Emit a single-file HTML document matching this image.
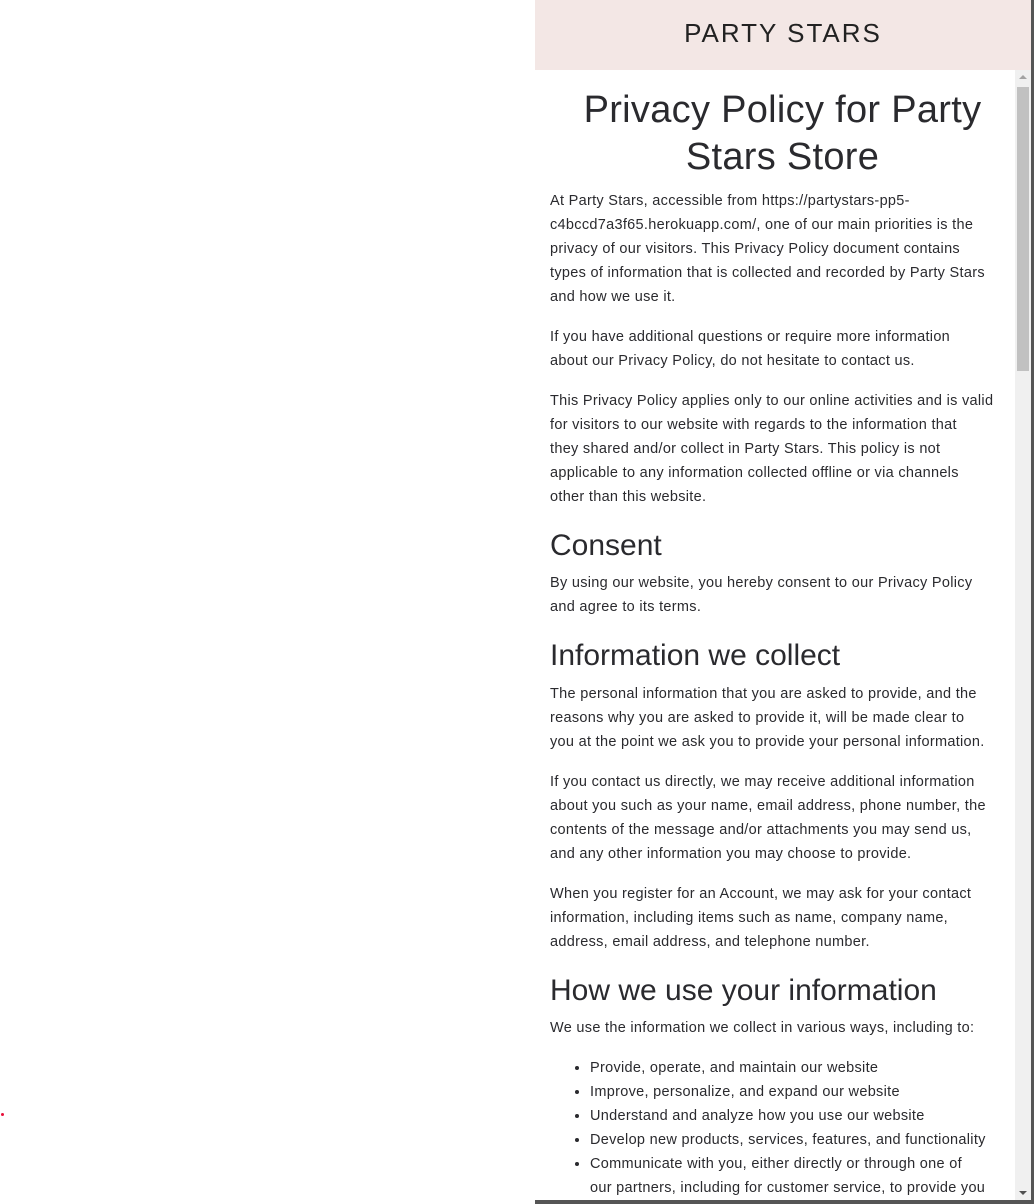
<!DOCTYPE html>
<html><head><meta charset="utf-8"><style>
html,body{margin:0;padding:0;width:1034px;height:1204px;background:#fff;overflow:hidden;font-family:"Liberation Sans",sans-serif;color:#2a2a2e}
.dot{position:absolute;left:1px;top:1113px;width:3px;height:3px;background:#e8103a;border-radius:50%}
.panel{position:absolute;left:535px;top:0;width:496px;height:1200px;border-right:3px solid #555;border-bottom:4px solid #555;overflow:hidden;background:#fff}
.hdr{height:70px;background:#f3e7e5;text-align:center;line-height:66px;font-size:26px;letter-spacing:2px;color:#222}
.sb{position:absolute;left:480px;top:70px;width:16px;height:1130px;background:#f0f0f0}
.thumb{position:absolute;left:2px;top:17px;width:12px;height:284px;background:#c1c1c1}
.au{position:absolute;left:4px;top:5px;width:0;height:0;border-left:4px solid transparent;border-right:4px solid transparent;border-bottom:4px solid #a3a3a3}
.ad{position:absolute;left:4px;bottom:5px;width:0;height:0;border-left:4px solid transparent;border-right:4px solid transparent;border-top:4px solid #505050}
.c{position:absolute;left:15px;top:70px;width:465px;white-space:nowrap}
h1{font-weight:normal;font-size:38px;line-height:47px;text-align:center;margin:17px 0 0;letter-spacing:0.3px}
p{font-size:14.5px;line-height:24px;margin:16px 0 0;letter-spacing:0.3px}
h2{font-weight:normal;font-size:30px;line-height:36px;margin:19px 0 0}
ul{margin:16px 0 0;padding-left:40px;font-size:14.5px;line-height:24px;letter-spacing:0.3px}
</style></head><body>
<div class="dot"></div>
<div class="panel">
<div class="hdr">PARTY STARS</div>
<div class="c">
<h1>Privacy Policy for Party<br>Stars Store</h1>
<p style="margin-top:8px">At Party Stars, accessible from https://partystars-pp5-<br>c4bccd7a3f65.herokuapp.com/, one of our main priorities is the<br>privacy of our visitors. This Privacy Policy document contains<br>types of information that is collected and recorded by Party Stars<br>and how we use it.</p>
<p>If you have additional questions or require more information<br>about our Privacy Policy, do not hesitate to contact us.</p>
<p>This Privacy Policy applies only to our online activities and is valid<br>for visitors to our website with regards to the information that<br>they shared and/or collect in Party Stars. This policy is not<br>applicable to any information collected offline or via channels<br>other than this website.</p>
<h2>Consent</h2>
<p style="margin-top:7px">By using our website, you hereby consent to our Privacy Policy<br>and agree to its terms.</p>
<h2>Information we collect</h2>
<p style="margin-top:8px">The personal information that you are asked to provide, and the<br>reasons why you are asked to provide it, will be made clear to<br>you at the point we ask you to provide your personal information.</p>
<p>If you contact us directly, we may receive additional information<br>about you such as your name, email address, phone number, the<br>contents of the message and/or attachments you may send us,<br>and any other information you may choose to provide.</p>
<p>When you register for an Account, we may ask for your contact<br>information, including items such as name, company name,<br>address, email address, and telephone number.</p>
<h2>How we use your information</h2>
<p style="margin-top:7px">We use the information we collect in various ways, including to:</p>
<ul>
<li>Provide, operate, and maintain our website</li>
<li>Improve, personalize, and expand our website</li>
<li>Understand and analyze how you use our website</li>
<li>Develop new products, services, features, and functionality</li>
<li>Communicate with you, either directly or through one of<br>our partners, including for customer service, to provide you</li>
</ul>
</div>
<div class="sb"><div class="au"></div><div class="thumb"></div><div class="ad"></div></div>
</div>
</body></html>
